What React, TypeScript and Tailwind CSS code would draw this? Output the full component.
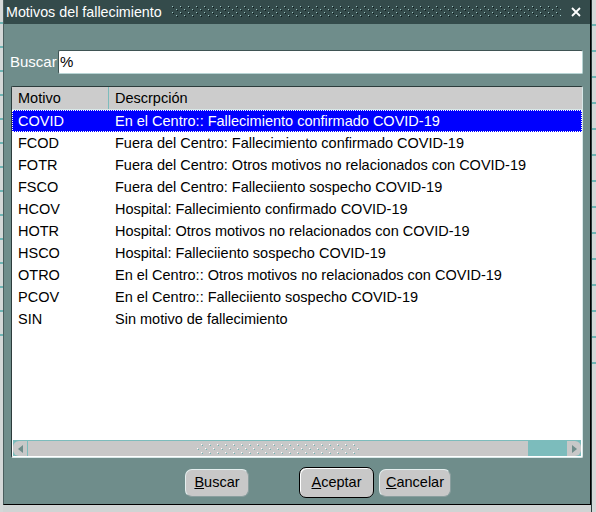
import React from 'react'

const ROWS: [string, string][] = [
  ['COVID', 'En el Centro:: Fallecimiento confirmado COVID-19'],
  ['FCOD', 'Fuera del Centro:  Fallecimiento confirmado COVID-19'],
  ['FOTR', 'Fuera del Centro: Otros motivos no relacionados con COVID-19'],
  ['FSCO', 'Fuera del Centro: Falleciiento sospecho COVID-19'],
  ['HCOV', 'Hospital: Fallecimiento confirmado COVID-19'],
  ['HOTR', 'Hospital: Otros motivos no relacionados con COVID-19'],
  ['HSCO', 'Hospital: Falleciiento sospecho COVID-19'],
  ['OTRO', 'En el Centro:: Otros motivos no relacionados con COVID-19'],
  ['PCOV', 'En el Centro:: Falleciiento sospecho COVID-19'],
  ['SIN', 'Sin motivo de fallecimiento'],
]

function Dots({ className = '' }: { className?: string }) {
  return (
    <svg className={className} width="100%" height="12">
      <defs>
        <pattern id="dots" width="8" height="6" patternUnits="userSpaceOnUse">
          <rect x="0" y="0" width="1" height="1" fill="#9cc4c2" />
          <rect x="1" y="1" width="1" height="1" fill="#0e1c1c" />
          <rect x="4" y="3" width="1" height="1" fill="#9cc4c2" />
          <rect x="5" y="4" width="1" height="1" fill="#0e1c1c" />
        </pattern>
      </defs>
      <rect width="100%" height="12" fill="url(#dots)" />
    </svg>
  )
}

function Grip() {
  return (
    <svg width="162" height="10">
      <defs>
        <pattern id="grip" width="8" height="8" patternUnits="userSpaceOnUse">
          <rect x="4" y="0" width="1" height="1" fill="#ffffff" />
          <rect x="5" y="1" width="1" height="1" fill="#6fb4b4" />
          <rect x="0" y="4" width="1" height="1" fill="#ffffff" />
          <rect x="1" y="5" width="1" height="1" fill="#6fb4b4" />
        </pattern>
      </defs>
      <rect width="162" height="10" fill="url(#grip)" />
    </svg>
  )
}

function Btn({ label, u, isDefault = false, w }: { label: string; u: string; isDefault?: boolean; w: string }) {
  const rest = label.slice(1)
  return (
    <button
      className={[
        'flex items-center justify-center rounded-[7px] bg-[#c8c8c8] text-[14.5px] text-black',
        isDefault ? 'h-[31px] border border-black shadow-[inset_1px_1px_0_#ffffff]' : 'h-[28px] border border-[#e4eeee] border-r-[#8a9e9e] border-b-[#8a9e9e]',
        w,
      ].join(' ')}
    >
      <span><span className="underline">{u}</span>{rest}</span>
    </button>
  )
}

export default function App() {
  return (
    <div className="flex w-[596px] h-[512px] bg-[#d0d4d4] font-['Liberation_Sans',Arial,sans-serif] overflow-hidden">
      {/* background app left strip */}
      <div className="w-[3px] h-full flex flex-col bg-[#d4d8d8]">
        {Array.from({ length: 14 }).map((_, i) => (
          <div key={i} className="h-[2px] mt-[22px] bg-[#6fb4b4]" />
        ))}
      </div>

      <div className="flex flex-col w-[588px] h-[505px] bg-[#6f8d8b] border-r border-b border-black border-l border-l-[#4a5e5e]">
        {/* title bar */}
        <div className="flex items-center h-[24px] bg-[#344b4b] pl-[2px] pr-[9px]">
          <span className="text-[14.3px] text-white leading-none whitespace-nowrap">Motivos del fallecimiento</span>
          <Dots className="flex-1 ml-[10px] mr-[10px]" />
          <svg width="10" height="10" viewBox="0 0 10 10">
            <path d="M1 1 L9 9 M9 1 L1 9" stroke="#ffffff" strokeWidth="1.8" />
          </svg>
        </div>

        {/* search row */}
        <div className="flex items-center mt-[26px] pl-[6px] pr-[7px]">
          <span className="text-[15px] text-white w-[48px]">Buscar</span>
          <div className="flex-1 h-[24px] bg-white rounded-[2px] border border-[#b8d4d4] border-t-[#3f5454] border-l-[#3f5454] flex items-center px-[1px] text-[15px] text-black">
            %
          </div>
        </div>

        {/* list */}
        <div className="mt-[12px] ml-[7px] mr-[7px] h-[372px] flex flex-col bg-white border border-[#d8e8e8] border-t-[#2c3c3c] border-l-[#2c3c3c] rounded-[2px]">
          <div className="flex h-[23px] bg-[#cccccc] text-[14.5px] text-black border-b border-[#d8e8e8]">
            <div className="w-[97px] pl-[6px] pt-[1px] flex items-center border-r border-[#7cbcbc]">Motivo</div>
            <div className="flex-1 pl-[6px] pt-[1px] flex items-center">Descrpción</div>
          </div>
          <div className="flex-1 flex flex-col">
            {ROWS.map(([code, desc], i) => (
              <div
                key={code}
                className={[
                  'flex h-[22px] items-center pt-[1px] text-[14.5px] whitespace-nowrap',
                  i === 0 ? 'bg-[#0000ff] text-white border border-dotted border-white' : 'text-black border border-transparent',
                ].join(' ')}
              >
                <span className="w-[97px] pl-[5px]">{code}</span>
                <span className="pl-[5px]">{desc}</span>
              </div>
            ))}
          </div>
          {/* horizontal scrollbar */}
          <div className="flex h-[16px] mx-[1px] mb-[1px] bg-[#7cbcbc] border-t border-[#7cbcbc]">
            <div className="w-[15px] flex items-center justify-center bg-[#c8c8c8] rounded-l-[6px] border-r border-[#7cbcbc]">
              <svg width="5" height="8" viewBox="0 0 5 8"><path d="M5 0 L0 4 L5 8 Z" fill="#6f8d8b" /></svg>
            </div>
            <div className="w-[500px] flex items-center justify-center bg-[#c8c8c8]">
              <Grip />
            </div>
            <div className="flex-1" />
            <div className="w-[14px] flex items-center justify-center bg-[#c8c8c8] rounded-r-[6px]">
              <svg width="5" height="8" viewBox="0 0 5 8"><path d="M0 0 L5 4 L0 8 Z" fill="#6f8d8b" /></svg>
            </div>
          </div>
        </div>

        {/* buttons */}
        <div className="flex items-center mt-[9px] pl-[181px]">
          <Btn label="Buscar" u="B" w="w-[64px]" />
          <div className="w-[50px]" />
          <Btn label="Aceptar" u="A" isDefault w="w-[75px]" />
          <div className="w-[5px]" />
          <Btn label="Cancelar" u="C" w="w-[72px]" />
        </div>
      </div>

      {/* background app right strip */}
      <div className="flex-1 h-full flex flex-col bg-[#d4d8d8] border-l border-[#2c3c3c]">
        {Array.from({ length: 14 }).map((_, i) => (
          <div key={i} className="h-[2px] mt-[24px] bg-[#6fb4b4]" />
        ))}
      </div>
    </div>
  )
}
